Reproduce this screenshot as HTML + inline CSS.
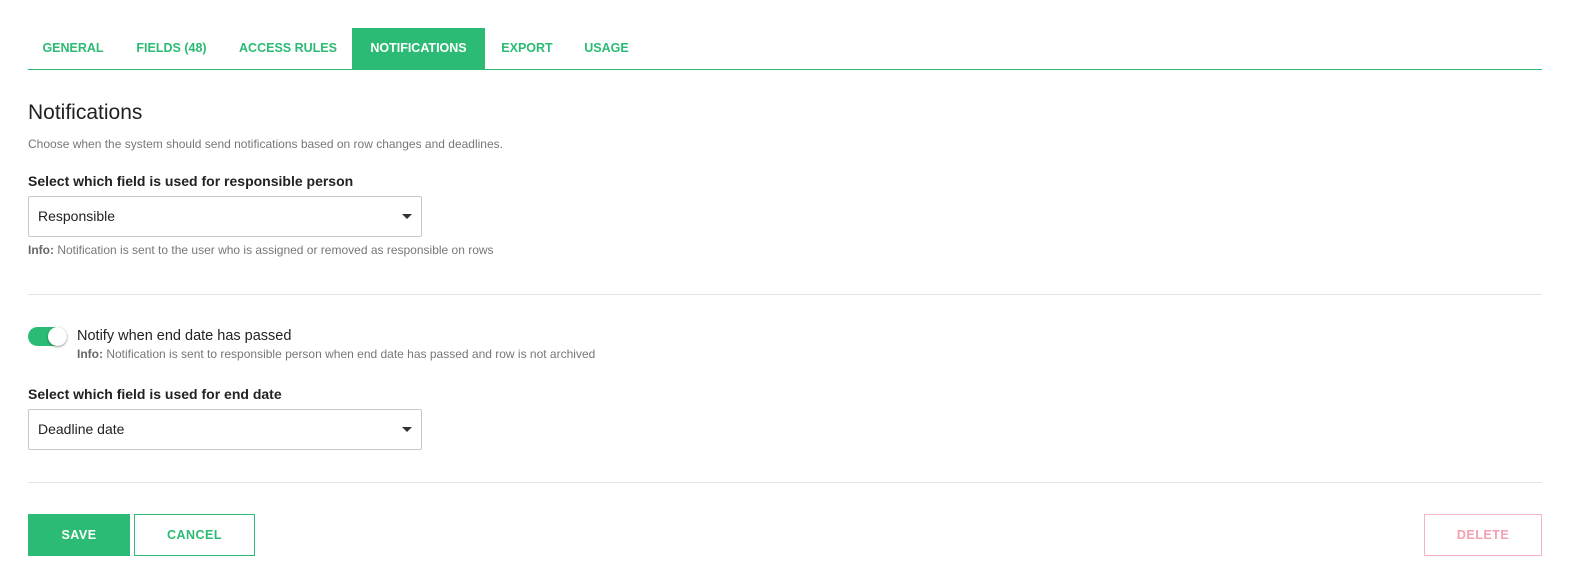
<!DOCTYPE html>
<html><head><style>
*{margin:0;padding:0;box-sizing:border-box}
body{width:1580px;height:588px;background:#fff;font-family:"Liberation Sans",sans-serif;position:relative;overflow:hidden;color:#222}
.a{position:absolute;white-space:nowrap}
.tab{position:absolute;top:28px;height:41px;line-height:41px;font-size:12.5px;font-weight:bold;color:#2bbb74;text-align:center}
.sel{position:absolute;left:28px;width:394px;height:41px;border:1px solid #c9c9c9;border-radius:2px;font-size:14px;line-height:39px;padding-left:9px;color:#222}
.sel:after{content:"";position:absolute;right:9px;top:17px;border-left:5px solid transparent;border-right:5px solid transparent;border-top:5px solid #333}
.hr{position:absolute;left:28px;width:1514px;height:1px;background:#e4e4e4}
.info{font-size:12px;color:#777}
.info b{color:#666}
.btn{position:absolute;top:514px;height:42px;line-height:42px;text-align:center;font-size:12.5px;font-weight:bold;letter-spacing:.5px}
</style></head><body>
<div class="tab" style="left:28px;width:90px">GENERAL</div>
<div class="tab" style="left:120px;width:103px">FIELDS (48)</div>
<div class="tab" style="left:225px;width:126px">ACCESS RULES</div>
<div class="tab" style="left:352px;width:133px;background:#2bbb74;color:#fff">NOTIFICATIONS</div>
<div class="tab" style="left:487px;width:80px">EXPORT</div>
<div class="tab" style="left:569px;width:75px">USAGE</div>
<div class="a" style="left:28px;top:69px;width:1514px;height:1px;background:#2bbb74"></div>

<div class="a" style="left:28px;top:101px;font-size:21px;color:#222">Notifications</div>
<div class="a" style="left:28px;top:137px;font-size:12px;color:#777">Choose when the system should send notifications based on row changes and deadlines.</div>
<div class="a" style="left:28px;top:173px;font-size:14px;font-weight:bold">Select which field is used for responsible person</div>
<div class="sel" style="top:196px">Responsible</div>
<div class="a info" style="left:28px;top:243px"><b>Info:</b> Notification is sent to the user who is assigned or removed as responsible on rows</div>
<div class="hr" style="top:294px"></div>

<div class="a" style="left:28px;top:327px;width:39px;height:19px;border-radius:10px;background:#2bbb74"></div>
<div class="a" style="left:48px;top:327px;width:19px;height:19px;border-radius:50%;background:#fff;box-shadow:0 1px 2px rgba(0,0,0,.4)"></div>
<div class="a" style="left:77px;top:328px;font-size:14.5px;color:#222">Notify when end date has passed</div>
<div class="a info" style="left:77px;top:347px"><b>Info:</b> Notification is sent to responsible person when end date has passed and row is not archived</div>
<div class="a" style="left:28px;top:386px;font-size:14px;font-weight:bold">Select which field is used for end date</div>
<div class="sel" style="top:409px">Deadline date</div>
<div class="hr" style="top:482px"></div>

<div class="btn" style="left:28px;width:102px;background:#2bbb74;color:#fff">SAVE</div>
<div class="btn" style="left:134px;width:121px;border:1px solid #2bbb74;color:#2bbb74;line-height:40px">CANCEL</div>
<div class="btn" style="left:1424px;width:118px;border:1px solid #f5b5c0;color:#f5a0b0;line-height:40px">DELETE</div>
</body></html>
